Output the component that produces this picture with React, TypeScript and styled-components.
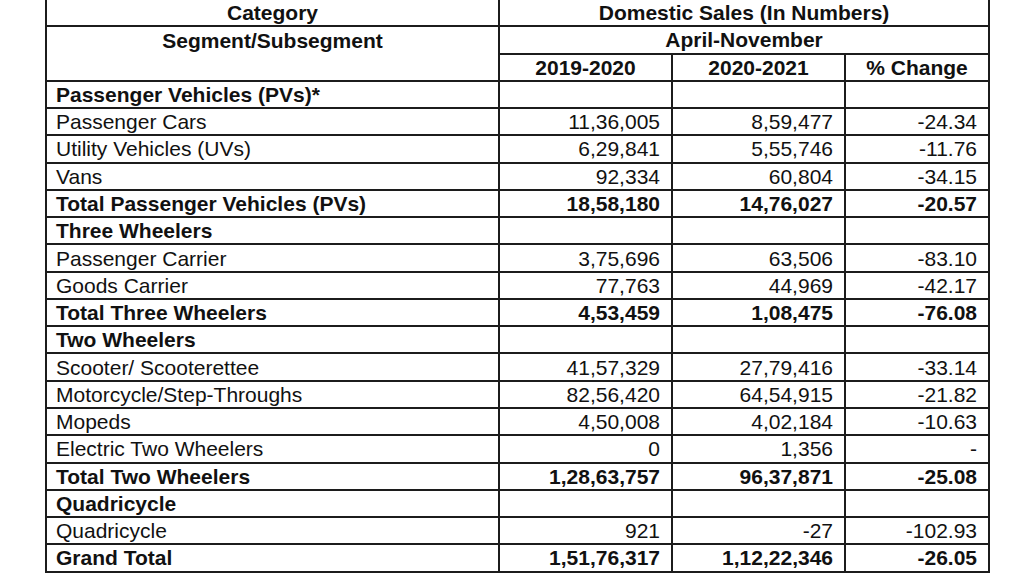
import React from "react";
import styled, { createGlobalStyle } from "styled-components";

const Global = createGlobalStyle`
  html, body { margin: 0; padding: 0; background: #fff; }
  body { font-family: "Liberation Sans", Arial, sans-serif; color: #111; }
`;

const Page = styled.div`
  width: 1024px;
  height: 575px;
  overflow: hidden;
  padding-left: 45px;
  box-sizing: border-box;
`;

const Table = styled.table`
  border-collapse: collapse;
  table-layout: fixed;
  width: 943px;
  margin-top: -2px;
  font-size: 21px;
  line-height: 1;
`;

const Row = styled.tr`
  height: 27.28px;
`;

const Cell = styled.td<{ $align?: "left" | "right" | "center"; $bold?: boolean; $top?: boolean }>`
  border: 2px solid #1c1c1c;
  padding: 0 11px 0 9px;
  text-align: ${(p) => p.$align ?? "left"};
  font-weight: ${(p) => (p.$bold ? 700 : 400)};
  vertical-align: ${(p) => (p.$top ? "top" : "middle")};
  white-space: nowrap;
  overflow: hidden;
`;

const HeadCell = styled(Cell).attrs({ as: "th" })`
  font-weight: 700;
  text-align: center;
  padding: 0 4px;
`;

const TopText = styled.div`
  padding-top: 3px;
`;

type Line = { label: string; a?: string; b?: string; c?: string; bold?: boolean };

const lines: Line[] = [
  { label: "Passenger Vehicles (PVs)*", bold: true },
  { label: "Passenger Cars", a: "11,36,005", b: "8,59,477", c: "-24.34" },
  { label: "Utility Vehicles (UVs)", a: "6,29,841", b: "5,55,746", c: "-11.76" },
  { label: "Vans", a: "92,334", b: "60,804", c: "-34.15" },
  { label: "Total Passenger Vehicles (PVs)", a: "18,58,180", b: "14,76,027", c: "-20.57", bold: true },
  { label: "Three Wheelers", bold: true },
  { label: "Passenger Carrier", a: "3,75,696", b: "63,506", c: "-83.10" },
  { label: "Goods Carrier", a: "77,763", b: "44,969", c: "-42.17" },
  { label: "Total Three Wheelers", a: "4,53,459", b: "1,08,475", c: "-76.08", bold: true },
  { label: "Two Wheelers", bold: true },
  { label: "Scooter/ Scooterettee", a: "41,57,329", b: "27,79,416", c: "-33.14" },
  { label: "Motorcycle/Step-Throughs", a: "82,56,420", b: "64,54,915", c: "-21.82" },
  { label: "Mopeds", a: "4,50,008", b: "4,02,184", c: "-10.63" },
  { label: "Electric Two Wheelers", a: "0", b: "1,356", c: "-" },
  { label: "Total Two Wheelers", a: "1,28,63,757", b: "96,37,871", c: "-25.08", bold: true },
  { label: "Quadricycle", bold: true },
  { label: "Quadricycle", a: "921", b: "-27", c: "-102.93" },
  { label: "Grand Total", a: "1,51,76,317", b: "1,12,22,346", c: "-26.05", bold: true },
];

export default function App() {
  return (
    <Page>
      <Global />
      <Table>
        <colgroup>
          <col style={{ width: 453 }} />
          <col style={{ width: 173 }} />
          <col style={{ width: 173 }} />
          <col style={{ width: 144 }} />
        </colgroup>
        <thead>
          <Row>
            <HeadCell>Category</HeadCell>
            <HeadCell colSpan={3}>Domestic Sales (In Numbers)</HeadCell>
          </Row>
          <Row>
            <HeadCell rowSpan={2} $top>
              <TopText>Segment/Subsegment</TopText>
            </HeadCell>
            <HeadCell colSpan={3}>April-November</HeadCell>
          </Row>
          <Row>
            <HeadCell>2019-2020</HeadCell>
            <HeadCell>2020-2021</HeadCell>
            <HeadCell>% Change</HeadCell>
          </Row>
        </thead>
        <tbody>
          {lines.map((l, i) => (
            <Row key={i}>
              <Cell $bold={l.bold}>{l.label}</Cell>
              <Cell $align="right" $bold={l.bold}>{l.a ?? ""}</Cell>
              <Cell $align="right" $bold={l.bold}>{l.b ?? ""}</Cell>
              <Cell $align="right" $bold={l.bold}>{l.c ?? ""}</Cell>
            </Row>
          ))}
        </tbody>
      </Table>
    </Page>
  );
}
